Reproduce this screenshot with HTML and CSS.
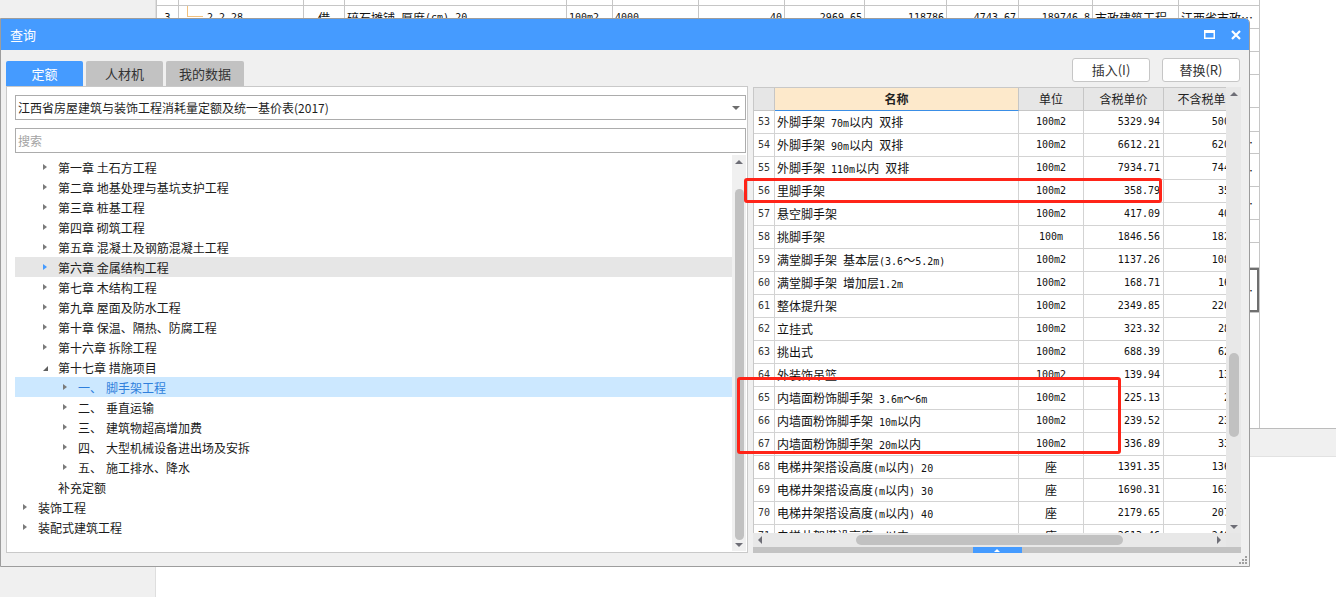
FILE: index.html
```html
<!DOCTYPE html>
<html lang="zh-CN">
<head>
<meta charset="utf-8">
<title>查询</title>
<link rel="stylesheet" href="styles.css">
</head>
<body>
<div class="desk">
  <div class="sidepane"></div>
  <div class="sheet">
    <div class="sheet-grid">
      <div class="srow h6"><div class="sc"></div><div class="sc"></div><div class="sc"></div><div class="sc"></div><div class="sc"></div><div class="sc"></div><div class="sc"></div><div class="sc"></div><div class="sc"></div><div class="sc"></div><div class="sc"></div><div class="sc"></div><div class="sc"></div></div>
      <div class="srow h23">
        <div class="sc c m">3</div>
        <div class="sc m"><span class="twig"></span>2-2-28</div>
        <div class="sc c">借</div>
        <div class="sc">碎石摊铺<span class="a">&nbsp;</span>厚度<span class="a">(cm) 20</span></div>
        <div class="sc m">100m2</div>
        <div class="sc m">4000</div>
        <div class="sc r m">40</div>
        <div class="sc r m">2969.65</div>
        <div class="sc r m">118786</div>
        <div class="sc r m">4743.67</div>
        <div class="sc r m">189746.8</div>
        <div class="sc">市政建筑工程</div>
        <div class="sc">江西省市政…</div>
      </div>
      <div class="srow h23"><div class="sc"></div><div class="sc"></div><div class="sc"></div><div class="sc"></div><div class="sc"></div><div class="sc"></div><div class="sc"></div><div class="sc"></div><div class="sc"></div><div class="sc"></div><div class="sc"></div><div class="sc"></div><div class="sc"></div></div>
      <div class="srow h23"><div class="sc"></div><div class="sc"></div><div class="sc"></div><div class="sc"></div><div class="sc"></div><div class="sc"></div><div class="sc"></div><div class="sc"></div><div class="sc"></div><div class="sc"></div><div class="sc"></div><div class="sc"></div><div class="sc"></div></div>
      <div class="srow h33"><div class="sc"></div><div class="sc"></div><div class="sc"></div><div class="sc"></div><div class="sc"></div><div class="sc"></div><div class="sc"></div><div class="sc"></div><div class="sc"></div><div class="sc"></div><div class="sc"></div><div class="sc"></div><div class="sc"></div></div>
      <div class="srow h24"><div class="sc"></div><div class="sc"></div><div class="sc"></div><div class="sc"></div><div class="sc"></div><div class="sc"></div><div class="sc"></div><div class="sc"></div><div class="sc"></div><div class="sc"></div><div class="sc"></div><div class="sc"></div><div class="sc"></div></div>
      <div class="srow h22"><div class="sc"></div><div class="sc"></div><div class="sc"></div><div class="sc"></div><div class="sc"></div><div class="sc"></div><div class="sc"></div><div class="sc"></div><div class="sc"></div><div class="sc"></div><div class="sc"></div><div class="sc"></div><div class="sc">江西省市政…</div></div>
      <div class="srow h33"><div class="sc"></div><div class="sc"></div><div class="sc"></div><div class="sc"></div><div class="sc"></div><div class="sc"></div><div class="sc"></div><div class="sc"></div><div class="sc"></div><div class="sc"></div><div class="sc"></div><div class="sc"></div><div class="sc">江西省市政…</div></div>
      <div class="srow h33"><div class="sc"></div><div class="sc"></div><div class="sc"></div><div class="sc"></div><div class="sc"></div><div class="sc"></div><div class="sc"></div><div class="sc"></div><div class="sc"></div><div class="sc"></div><div class="sc"></div><div class="sc"></div><div class="sc">江西省市政…</div></div>
      <div class="srow h23"><div class="sc"></div><div class="sc"></div><div class="sc"></div><div class="sc"></div><div class="sc"></div><div class="sc"></div><div class="sc"></div><div class="sc"></div><div class="sc"></div><div class="sc"></div><div class="sc"></div><div class="sc"></div><div class="sc"></div></div>
      <div class="srow h25"><div class="sc"></div><div class="sc"></div><div class="sc"></div><div class="sc"></div><div class="sc"></div><div class="sc"></div><div class="sc"></div><div class="sc"></div><div class="sc"></div><div class="sc"></div><div class="sc"></div><div class="sc"></div><div class="sc"></div></div>
      <div class="srow h45"><div class="sc"></div><div class="sc"></div><div class="sc"></div><div class="sc"></div><div class="sc"></div><div class="sc"></div><div class="sc"></div><div class="sc"></div><div class="sc"></div><div class="sc"></div><div class="sc"></div><div class="sc"></div><div class="sc sel">江西省市政…</div></div>
      <div class="srow hrest"><div class="sc"></div><div class="sc"></div><div class="sc"></div><div class="sc"></div><div class="sc"></div><div class="sc"></div><div class="sc"></div><div class="sc"></div><div class="sc"></div><div class="sc"></div><div class="sc"></div><div class="sc"></div><div class="sc"></div></div>
    </div>
    <div class="sheet-band"></div>
    <div class="sheet-blank"></div>
  </div>

  <div class="dialog">
    <div class="titlebar">
      <span class="title">查询</span>
      <div class="tb-btns">
        <svg class="tb-icon" width="11" height="9" viewBox="0 0 11 9"><rect x="0.75" y="0.75" width="9.5" height="7.5" fill="none" stroke="#fff" stroke-width="1.5"/><rect x="0" y="0" width="11" height="3" fill="#fff"/></svg>
        <svg class="tb-icon" width="10" height="10" viewBox="0 0 10 10"><path d="M1 1L9 9M9 1L1 9" stroke="#fff" stroke-width="2.2" fill="none"/></svg>
      </div>
    </div>
    <div class="dlg-body">
      <div class="leftcol">
        <div class="tabs">
          <div class="tab on">定额</div>
          <div class="tab">人材机</div>
          <div class="tab wide">我的数据</div>
        </div>
        <div class="panel">
          <div class="combo"><span class="combo-text">江西省房屋建筑与装饰工程消耗量定额及统一基价表(2017)</span><span class="combo-caret"></span></div>
          <input class="search" type="text" placeholder="搜索">
          <div class="tree">
            <div class="tree-list">
              <div class="node l1"><i class="tw"></i>第一章 土石方工程</div>
              <div class="node l1"><i class="tw"></i>第二章 地基处理与基坑支护工程</div>
              <div class="node l1"><i class="tw"></i>第三章 桩基工程</div>
              <div class="node l1"><i class="tw"></i>第四章 砌筑工程</div>
              <div class="node l1"><i class="tw"></i>第五章 混凝土及钢筋混凝土工程</div>
              <div class="node l1 hover"><i class="tw"></i>第六章 金属结构工程</div>
              <div class="node l1"><i class="tw"></i>第七章 木结构工程</div>
              <div class="node l1"><i class="tw"></i>第九章 屋面及防水工程</div>
              <div class="node l1"><i class="tw"></i>第十章 保温、隔热、防腐工程</div>
              <div class="node l1"><i class="tw"></i>第十六章 拆除工程</div>
              <div class="node l1"><i class="tw open"></i>第十七章 措施项目</div>
              <div class="node l2 sel"><i class="tw"></i><span class="ord">一、</span>脚手架工程</div>
              <div class="node l2"><i class="tw"></i><span class="ord">二、</span>垂直运输</div>
              <div class="node l2"><i class="tw"></i><span class="ord">三、</span>建筑物超高增加费</div>
              <div class="node l2"><i class="tw"></i><span class="ord">四、</span>大型机械设备进出场及安拆</div>
              <div class="node l2"><i class="tw"></i><span class="ord">五、</span>施工排水、降水</div>
              <div class="node l1"><i class="tw none"></i>补充定额</div>
              <div class="node l0"><i class="tw"></i>装饰工程</div>
              <div class="node l0"><i class="tw"></i>装配式建筑工程</div>
            </div>
            <div class="tsb">
              <div class="sb-up"></div>
              <div class="tsb-thumb"></div>
              <div class="sb-down"></div>
            </div>
          </div>
        </div>
      </div>

      <div class="rightcol">
        <div class="actions">
          <div class="btn">插入(I)</div>
          <div class="btn">替换(R)</div>
        </div>
        <div class="grid">
          <div class="grid-main">
            <div class="viewport">
              <div class="gr gh"><div class="gc"></div><div class="gc nm">名称</div><div class="gc u">单位</div><div class="gc u">含税单价</div><div class="gc u last">不含税单价</div></div>
              <div class="gr"><div class="gc no">53</div><div class="gc nm">外脚手架<span class="a"> 70m</span>以内<span class="a"> </span>双排</div><div class="gc u m">100m2</div><div class="gc p">5329.94</div><div class="gc p">5007.41</div></div>
              <div class="gr"><div class="gc no">54</div><div class="gc nm">外脚手架<span class="a"> 90m</span>以内<span class="a"> </span>双排</div><div class="gc u m">100m2</div><div class="gc p">6612.21</div><div class="gc p">6208.63</div></div>
              <div class="gr"><div class="gc no">55</div><div class="gc nm">外脚手架<span class="a"> 110m</span>以内<span class="a"> </span>双排</div><div class="gc u m">100m2</div><div class="gc p">7934.71</div><div class="gc p">7449.28</div></div>
              <div class="gr"><div class="gc no">56</div><div class="gc nm">里脚手架</div><div class="gc u m">100m2</div><div class="gc p">358.79</div><div class="gc p">351.97</div></div>
              <div class="gr"><div class="gc no">57</div><div class="gc nm">悬空脚手架</div><div class="gc u m">100m2</div><div class="gc p">417.09</div><div class="gc p">404.18</div></div>
              <div class="gr"><div class="gc no">58</div><div class="gc nm">挑脚手架</div><div class="gc u m">100m</div><div class="gc p">1846.56</div><div class="gc p">1822.07</div></div>
              <div class="gr"><div class="gc no">59</div><div class="gc nm">满堂脚手架<span class="a"> </span>基本层<span class="a">(3.6</span>～<span class="a">5.2m)</span></div><div class="gc u m">100m2</div><div class="gc p">1137.26</div><div class="gc p">1081.52</div></div>
              <div class="gr"><div class="gc no">60</div><div class="gc nm">满堂脚手架<span class="a"> </span>增加层<span class="a">1.2m</span></div><div class="gc u m">100m2</div><div class="gc p">168.71</div><div class="gc p">162.30</div></div>
              <div class="gr"><div class="gc no">61</div><div class="gc nm">整体提升架</div><div class="gc u m">100m2</div><div class="gc p">2349.85</div><div class="gc p">2207.64</div></div>
              <div class="gr"><div class="gc no">62</div><div class="gc nm">立挂式</div><div class="gc u m">100m2</div><div class="gc p">323.32</div><div class="gc p">289.49</div></div>
              <div class="gr"><div class="gc no">63</div><div class="gc nm">挑出式</div><div class="gc u m">100m2</div><div class="gc p">688.39</div><div class="gc p">620.87</div></div>
              <div class="gr"><div class="gc no">64</div><div class="gc nm">外装饰吊篮</div><div class="gc u m">100m2</div><div class="gc p">139.94</div><div class="gc p">131.22</div></div>
              <div class="gr"><div class="gc no">65</div><div class="gc nm">内墙面粉饰脚手架<span class="a"> 3.6m</span>～<span class="a">6m</span></div><div class="gc u m">100m2</div><div class="gc p">225.13</div><div class="gc p">211.1</div></div>
              <div class="gr"><div class="gc no">66</div><div class="gc nm">内墙面粉饰脚手架<span class="a"> 10m</span>以内</div><div class="gc u m">100m2</div><div class="gc p">239.52</div><div class="gc p">233.45</div></div>
              <div class="gr"><div class="gc no">67</div><div class="gc nm">内墙面粉饰脚手架<span class="a"> 20m</span>以内</div><div class="gc u m">100m2</div><div class="gc p">336.89</div><div class="gc p">330.40</div></div>
              <div class="gr"><div class="gc no">68</div><div class="gc nm">电梯井架搭设高度<span class="a">(m</span>以内<span class="a">) 20</span></div><div class="gc u">座</div><div class="gc p">1391.35</div><div class="gc p">1364.28</div></div>
              <div class="gr"><div class="gc no">69</div><div class="gc nm">电梯井架搭设高度<span class="a">(m</span>以内<span class="a">) 30</span></div><div class="gc u">座</div><div class="gc p">1690.31</div><div class="gc p">1638.90</div></div>
              <div class="gr"><div class="gc no">70</div><div class="gc nm">电梯井架搭设高度<span class="a">(m</span>以内<span class="a">) 40</span></div><div class="gc u">座</div><div class="gc p">2179.65</div><div class="gc p">2073.51</div></div>
              <div class="gr"><div class="gc no">71</div><div class="gc nm">电梯井架搭设高度<span class="a">(m</span>以内<span class="a">) 50</span></div><div class="gc u">座</div><div class="gc p">2613.46</div><div class="gc p">2467.33</div></div>
            </div>
            <div class="vsb">
              <div class="sb-up"></div>
              <div class="vsb-thumb"></div>
              <div class="sb-down"></div>
            </div>
          </div>
          <div class="hsb">
            <div class="sb-left"></div>
            <div class="hsb-thumb"></div>
            <div class="hsb-fill"></div>
            <div class="sb-right"></div>
            <div class="hsb-corner"></div>
          </div>
          <div class="splitter"><div class="splitter-knob"></div></div>
        </div>
      </div>
    </div>
    <svg class="grip" width="8" height="8" viewBox="0 0 8 8"><rect x="6" y="0" width="2" height="2" fill="#a0a0a0"/><rect x="3" y="3" width="2" height="2" fill="#a0a0a0"/><rect x="6" y="3" width="2" height="2" fill="#a0a0a0"/><rect x="0" y="6" width="2" height="2" fill="#a0a0a0"/><rect x="3" y="6" width="2" height="2" fill="#a0a0a0"/><rect x="6" y="6" width="2" height="2" fill="#a0a0a0"/></svg>
  </div>

  <div class="mark mark-1"></div>
  <div class="mark mark-2"></div>
</div>
</body>
</html>
```
FILE: styles.css
```css
* { box-sizing: border-box; margin: 0; padding: 0; }
html, body { width: 1336px; height: 597px; overflow: hidden; background: #fff; }
body { font-family: "Noto Sans CJK SC", "Noto Sans", sans-serif; font-size: 12px; color: #222; }

.desk { position: relative; width: 1336px; height: 597px; display: flex; }

/* half-width latin runs, SimSun-like metrics */
.a { font-family: "DejaVu Sans Mono", "Liberation Mono", monospace; font-size: 10px; }

/* background application */
.sidepane { flex: none; width: 156px; height: 100%; background: #f0f0f0; border-right: 1px solid #dedede; }
.sheet { flex: 1; display: flex; flex-direction: column; min-width: 0; }
.sheet-grid { height: 428px; overflow: hidden; }
.srow {
  display: grid;
  grid-template-columns: 22px 125px 41px 222px 46px 86px 86px 80px 82px 72px 74px 86px 81px;
  width: 1104px;
  border-left: 1px solid #c6c6c6;
}
.h6 { height: 6px; }
.h22 { height: 22px; }
.h23 { height: 23px; }
.h24 { height: 24px; }
.h25 { height: 25px; }
.h33 { height: 33px; }
.h45 { height: 45px; }
.hrest { height: 115px; }
.hrest .sc { border-bottom: 0; }
.sc {
  border-right: 1px solid #c6c6c6;
  border-bottom: 1px solid #c6c6c6;
  display: flex;
  align-items: center;
  padding: 0 2px;
  white-space: nowrap;
  overflow: hidden;
  font-family: "Noto Sans CJK SC", sans-serif;
  font-size: 12px;
  color: #111;
}
.sc.m { font-family: "DejaVu Sans Mono", "Liberation Mono", monospace; font-size: 10px; }
.sc.r { justify-content: flex-end; }
.sc.c { justify-content: center; }
.sc.sel { box-shadow: inset 0 0 0 2px #6f6f6f; }
.twig {
  flex: none;
  align-self: flex-start;
  width: 16px;
  height: 11px;
  margin: 0 4px 0 6px;
  border-left: 1px solid #f2c07c;
  border-bottom: 1px solid #f2c07c;
}
.sheet-band { height: 29px; flex: none; background: #f0f0f0; border-top: 1px solid #bcbcbc; border-bottom: 1px solid #e2e2e2; }
.sheet-blank { flex: 1; }

/* dialog window */
.dialog {
  position: absolute;
  left: 0;
  top: 18px;
  width: 1250px;
  height: 549px;
  border: 1px solid #9d9d9d;
  border-radius: 0 5px 0 0;
  background: #f0f0f0;
  display: flex;
  flex-direction: column;
  z-index: 2;
  overflow: hidden;
}
.titlebar { height: 31px; flex: none; background: #459bff; display: flex; align-items: center; padding: 0 8px 0 9px; color: #fff; }
.title { flex: 1; font-size: 13px; }
.tb-btns { display: flex; align-items: center; gap: 16px; }
.tb-icon { display: block; }

.dlg-body { flex: 1; display: flex; gap: 5px; padding: 0 8px 0 5px; min-height: 0; }

.leftcol { width: 742px; flex: none; display: flex; flex-direction: column; padding: 11px 0 13px; }
.tabs { display: flex; gap: 3px; height: 25px; flex: none; }
.tab { width: 77px; background: #c2c2c2; color: #333; font-size: 13px; display: flex; align-items: center; justify-content: center; border-radius: 2px 2px 0 0; }
.tab.on { background: #459bff; color: #fff; }
.tab.wide { width: 78px; }

.panel { flex: 1; min-height: 0; background: #fff; border: 1px solid #c9c9c9; display: flex; flex-direction: column; padding: 8px 1px 1px 8px; }
.combo { height: 25px; flex: none; border: 1px solid #acacac; display: flex; align-items: center; padding-left: 2px; font-size: 12px; color: #1e1e1e; }
.combo-text { flex: 1; white-space: nowrap; }
.combo-caret { width: 0; height: 0; border-left: 4px solid transparent; border-right: 4px solid transparent; border-top: 4px solid #6d6d6d; margin-right: 5px; }
.search {
  display: block;
  width: 100%;
  margin-top: 8px;
  height: 25px;
  flex: none;
  border: 1px solid #acacac;
  padding: 0 2px;
  font-family: "Noto Sans CJK SC", "Noto Sans", sans-serif;
  font-size: 12px;
  color: #222;
  background: #fff;
  outline: none;
}
.search::placeholder { color: #a3a3a3; }

.tree { flex: 1; min-height: 0; margin-top: 2px; display: flex; }
.tree-list { flex: 1; padding-top: 2px; overflow: hidden; }
.node { height: 20px; display: flex; align-items: center; white-space: nowrap; color: #1a1a1a; font-size: 12px; }
.l0 { padding-left: 8px; }
.l1 { padding-left: 28px; }
.l2 { padding-left: 48px; }
.tw { flex: none; width: 15px; height: 20px; display: flex; align-items: center; }
.tw::before {
  content: "";
  width: 0;
  height: 0;
  border-left: 4px solid #7b7b7b;
  border-top: 3px solid transparent;
  border-bottom: 3px solid transparent;
}
.tw.open::before { border-top: 0; border-left: 5px solid transparent; border-bottom: 5px solid #5f5f5f; margin-top: 3px; }
.tw.none::before { display: none; }
.node.hover { background: #e6e6e6; }
.node.hover .tw::before { border-left-color: #459bff; }
.node.sel { background: #cce8ff; color: #2f7fdc; }
.ord { margin-right: 4px; }

.tsb { width: 14px; flex: none; background: #f0f0f0; display: flex; flex-direction: column; align-items: center; }
.sb-up { height: 14px; width: 100%; flex: none; display: flex; align-items: center; justify-content: center; }
.sb-up::before { content: ""; border-left: 4px solid transparent; border-right: 4px solid transparent; border-bottom: 4px solid #6e6e76; }
.sb-down { flex: 1; width: 100%; display: flex; align-items: flex-end; justify-content: center; padding-bottom: 4px; }
.sb-down::before { content: ""; border-left: 4px solid transparent; border-right: 4px solid transparent; border-top: 4px solid #6e6e76; }
.tsb-thumb { flex: none; width: 9px; height: 351px; margin-top: 20px; border-radius: 5px; background: #c1c1c1; }

/* right column */
.rightcol { flex: 1; min-width: 0; display: flex; flex-direction: column; padding: 7px 0 13px; }
.actions { height: 25px; flex: none; display: flex; justify-content: flex-end; align-items: center; gap: 12px; padding-right: 1px; }
.btn { width: 78px; height: 24px; background: #fff; border: 1px solid #c6c6c6; border-radius: 3px; font-size: 13px; color: #333; display: flex; align-items: center; justify-content: center; }

.grid { flex: 1; min-height: 0; margin-top: 5px; display: flex; flex-direction: column; }
.grid-main { flex: 1; min-height: 0; display: flex; }
.viewport { flex: 1; min-width: 0; overflow: hidden; background: #fff; border-left: 1px solid #c8c8c8; border-top: 1px solid #c8c8c8; }
.gr { display: grid; grid-template-columns: 21px 244px 65px 80px 94px; width: 504px; height: 23px; }
.gc {
  border-right: 1px solid #d3d3d3;
  border-bottom: 1px solid #d3d3d3;
  line-height: 22px;
  white-space: nowrap;
  overflow: hidden;
  font-family: "Noto Sans CJK SC", sans-serif;
  font-size: 12px;
  color: #111;
}
.gh .gc { background: #e6e6e6; border-right-color: #c6c6c6; border-bottom-color: #c6c6c6; color: #222; }
.gh .gc.nm { background: #fde9cb; border-bottom: 1px solid #3a8ee6; font-weight: 700; text-align: center; padding-left: 0; }
.gh .gc.last { padding-right: 6px; }
.gc.no { text-align: center; font-family: "DejaVu Sans Mono", "Liberation Mono", monospace; font-size: 10px; color: #333; }
.gc.nm { padding-left: 2px; }
.gc.u { text-align: center; }
.gc.m { font-family: "DejaVu Sans Mono", "Liberation Mono", monospace; font-size: 10px; }
.gc.p { text-align: right; padding-right: 3px; font-family: "DejaVu Sans Mono", "Liberation Mono", monospace; font-size: 10px; }

.vsb { width: 15px; flex: none; background: #e8e8e8; display: flex; flex-direction: column; align-items: center; }
.vsb-thumb { flex: none; width: 10px; height: 84px; margin-top: 252px; border-radius: 5px; background: #c1c1c1; }

.hsb { height: 14px; flex: none; background: #e8e8e8; display: flex; align-items: center; }
.sb-left { width: 14px; height: 14px; flex: none; display: flex; align-items: center; justify-content: center; }
.sb-left::before { content: ""; border-top: 4px solid transparent; border-bottom: 4px solid transparent; border-right: 4px solid #6e6e76; }
.sb-right { width: 14px; height: 14px; flex: none; display: flex; align-items: center; justify-content: center; }
.sb-right::before { content: ""; border-top: 4px solid transparent; border-bottom: 4px solid transparent; border-left: 4px solid #6e6e76; }
.hsb-thumb { flex: none; width: 267px; height: 10px; margin-left: 89px; border-radius: 5px; background: #c1c1c1; }
.hsb-fill { flex: 1; }
.hsb-corner { width: 15px; height: 14px; flex: none; background: #e6e6e6; }

.splitter { height: 6px; flex: none; background: #c3c3c3; display: flex; justify-content: center; }
.splitter-knob { width: 49px; background: #459bff; display: flex; align-items: center; justify-content: center; }
.splitter-knob::before { content: ""; border-left: 3px solid transparent; border-right: 3px solid transparent; border-bottom: 3px solid #fff; }

.grip { position: absolute; right: 2px; bottom: 2px; display: block; }

/* red annotation boxes drawn over the screenshot */
.mark { position: absolute; border: 3px solid #ff2418; border-radius: 3px; z-index: 3; pointer-events: none; }
.mark-1 { left: 744px; top: 178px; width: 418px; height: 25px; }
.mark-2 { left: 737px; top: 377px; width: 384px; height: 77px; }
```
